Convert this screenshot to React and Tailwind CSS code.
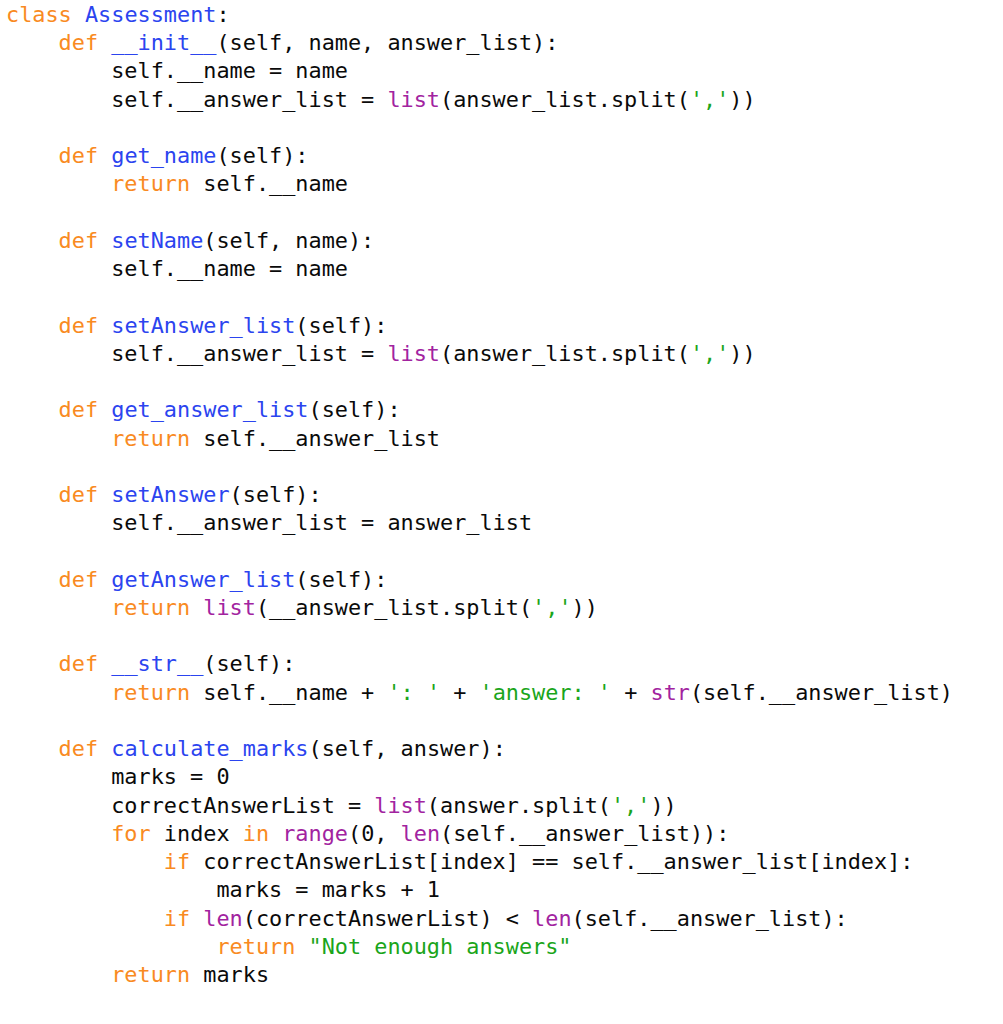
import React from "react";

// token colours
const K = "text-[#f98a22]"; // keywords
const F = "text-[#2b44ef]"; // def / class names
const B = "text-[#a2239f]"; // builtins
const S = "text-[#1aa51a]"; // strings

const lines = [
  [[K, "class"], [null, " "], [F, "Assessment"], [null, ":"]],
  [[null, "    "], [K, "def"], [null, " "], [F, "__init__"], [null, "(self, name, answer_list):"]],
  [[null, "        self.__name = name"]],
  [[null, "        self.__answer_list = "], [B, "list"], [null, "(answer_list.split("], [S, "','"], [null, "))"]],
  [],
  [[null, "    "], [K, "def"], [null, " "], [F, "get_name"], [null, "(self):"]],
  [[null, "        "], [K, "return"], [null, " self.__name"]],
  [],
  [[null, "    "], [K, "def"], [null, " "], [F, "setName"], [null, "(self, name):"]],
  [[null, "        self.__name = name"]],
  [],
  [[null, "    "], [K, "def"], [null, " "], [F, "setAnswer_list"], [null, "(self):"]],
  [[null, "        self.__answer_list = "], [B, "list"], [null, "(answer_list.split("], [S, "','"], [null, "))"]],
  [],
  [[null, "    "], [K, "def"], [null, " "], [F, "get_answer_list"], [null, "(self):"]],
  [[null, "        "], [K, "return"], [null, " self.__answer_list"]],
  [],
  [[null, "    "], [K, "def"], [null, " "], [F, "setAnswer"], [null, "(self):"]],
  [[null, "        self.__answer_list = answer_list"]],
  [],
  [[null, "    "], [K, "def"], [null, " "], [F, "getAnswer_list"], [null, "(self):"]],
  [[null, "        "], [K, "return"], [null, " "], [B, "list"], [null, "(__answer_list.split("], [S, "','"], [null, "))"]],
  [],
  [[null, "    "], [K, "def"], [null, " "], [F, "__str__"], [null, "(self):"]],
  [[null, "        "], [K, "return"], [null, " self.__name + "], [S, "': '"], [null, " + "], [S, "'answer: '"], [null, " + "], [B, "str"], [null, "(self.__answer_list)"]],
  [],
  [[null, "    "], [K, "def"], [null, " "], [F, "calculate_marks"], [null, "(self, answer):"]],
  [[null, "        marks = 0"]],
  [[null, "        correctAnswerList = "], [B, "list"], [null, "(answer.split("], [S, "','"], [null, "))"]],
  [[null, "        "], [K, "for"], [null, " index "], [K, "in"], [null, " "], [B, "range"], [null, "(0, "], [B, "len"], [null, "(self.__answer_list)):"]],
  [[null, "            "], [K, "if"], [null, " correctAnswerList[index] == self.__answer_list[index]:"]],
  [[null, "                marks = marks + 1"]],
  [[null, "            "], [K, "if"], [null, " "], [B, "len"], [null, "(correctAnswerList) < "], [B, "len"], [null, "(self.__answer_list):"]],
  [[null, "                "], [K, "return"], [null, " "], [S, "\"Not enough answers\""]],
  [[null, "        "], [K, "return"], [null, " marks"]],
];

export default function App() {
  return (
    <div className="w-[1003px] h-[1024px] bg-white overflow-hidden">
      <pre className="pl-[6px] pt-[1px] text-[21.85px] leading-[28.24px] text-[#0a0a0a] font-['DejaVu_Sans_Mono',monospace]">
        {lines.map((toks, i) => (
          <div key={i} className="h-[28.24px] whitespace-pre">
            {toks.map(([cls, t], j) =>
              cls ? (
                <span key={j} className={cls}>{t}</span>
              ) : (
                <span key={j}>{t}</span>
              )
            )}
          </div>
        ))}
      </pre>
    </div>
  );
}
